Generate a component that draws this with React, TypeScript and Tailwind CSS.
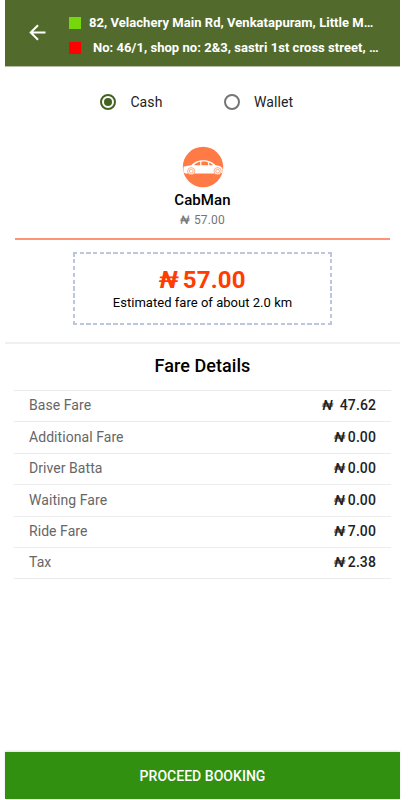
import clsx from "clsx";
import { useState } from "react";

const fares = [
  { label: "Base Fare", amount: "47.62", spaced: true },
  { label: "Additional Fare", amount: "0.00" },
  { label: "Driver Batta", amount: "0.00" },
  { label: "Waiting Fare", amount: "0.00" },
  { label: "Ride Fare", amount: "7.00" },
  { label: "Tax", amount: "2.38" },
];

function BackIcon() {
  return (
    <svg width="18" height="18" viewBox="0 0 18 18" fill="none" stroke="white" strokeWidth="2">
      <path d="M16.5 8.5H2.2M9 1.2L1.7 8.5l7.3 7.3" />
    </svg>
  );
}

function CarIcon() {
  return (
    <svg width="42" height="42" viewBox="0 0 42 42">
      <circle cx="21" cy="21" r="20.2" fill="#ff7a45" />
      <path
        d="M1.5 20.8C4 19.7 7 19.5 9.2 19.2C12.2 16.4 15 14.2 21 14.2C27 14.2 30 15.8 33.6 19.2C37.6 19.6 40.3 20.6 40.7 23.4L40.4 26.8L38 27.6H3.5L1.4 26.2Z"
        fill="white"
      />
      <path
        d="M12 19.2C13.6 17.4 15.4 16.2 18.2 15.8V19.2ZM19.4 15.7C22 15.5 23.6 15.6 25.6 16L26.4 19.2H19.4ZM26.8 16.4C28.6 17 30 18 31.2 19.2H27.6Z"
        fill="#ff7a45"
      />
      <g fill="white" stroke="#ff7a45" strokeWidth="0.6">
        <circle cx="9.2" cy="25.2" r="3.6" />
        <circle cx="35.6" cy="25.2" r="3.6" />
        <circle cx="9.2" cy="25.2" r="1.9" />
        <circle cx="35.6" cy="25.2" r="1.9" />
      </g>
    </svg>
  );
}

function Naira() {
  return <span className="inline-block -skew-x-12">₦</span>;
}

function App() {
  const [payment, setPayment] = useState("Cash");

  return (
    <div className="h-[800px] w-[408px] bg-white pl-[5px] font-['Roboto',sans-serif] text-black">
      <div className="flex h-[799px] w-[395px] flex-col">
        <header className="flex h-[67px] shrink-0 items-center border-b border-[#b5bca8] bg-[#526b2d] pl-6 text-white">
          <button>
            <BackIcon />
          </button>
          <div className="ml-[22px] flex flex-col pt-1 text-[13px] font-bold leading-[25px] tracking-[0.04px] whitespace-nowrap">
            <div className="flex items-center">
              <span className="mr-2 size-3 bg-[#76d80c]" />
              <span>82, Velachery Main Rd, Venkatapuram, Little M…</span>
            </div>
            <div className="flex items-center">
              <span className="mr-3 size-3 bg-[#ff0000]" />
              <span>No: 46/1, shop no: 2&amp;3, sastri 1st cross street, …</span>
            </div>
          </div>
        </header>

        <div className="flex h-[70px] shrink-0 items-center pl-[95.4px] text-sm tracking-[0.1px] text-[#222222]">
          {["Cash", "Wallet"].map((name) => (
            <button key={name} className="flex w-[123.5px] items-center gap-[14px]" onClick={() => setPayment(name)}>
              <span
                className={clsx(
                  "flex size-4 items-center justify-center rounded-full border-2",
                  payment === name ? "border-[#456320]" : "border-[#757575]"
                )}
              >
                {payment === name && <span className="size-2 rounded-full bg-[#456320]" />}
              </span>
              <span>{name}</span>
            </button>
          ))}
        </div>

        <div className="mx-[10px] flex h-[103px] shrink-0 flex-col items-center border-b-2 border-[#ff9376] pt-[9px]">
          <CarIcon />
          <div className="mt-0.5 text-[15px] font-medium leading-5 tracking-[0.1px]">CabMan</div>
          <div className="text-xs leading-5 tracking-[0.15px] text-[#757575]">
            <Naira /> <span className="ml-px">57.00</span>
          </div>
        </div>

        <div className="mt-3 ml-[68px] flex h-[73px] w-[259px] shrink-0 flex-col items-center bg-[repeating-linear-gradient(90deg,#bcc6dc_0_4.4px,transparent_4.4px_6.7px),repeating-linear-gradient(90deg,#bcc6dc_0_4.4px,transparent_4.4px_6.7px),repeating-linear-gradient(0deg,#bcc6dc_0_4.4px,transparent_4.4px_6.85px),repeating-linear-gradient(0deg,#bcc6dc_0_4.4px,transparent_4.4px_6.85px)] bg-[size:100%_2px,100%_2px,2px_100%,2px_100%] bg-[position:top,bottom,left,right] bg-no-repeat pt-3.5">
          <div className="text-2xl font-bold leading-7 text-[#ff3d00]">
            <Naira />
            <span className="ml-1 tracking-[0.2px]">57.00</span>
          </div>
          <div className="text-[13px] leading-[18px] tracking-[0.03px]">Estimated fare of about 2.0 km</div>
        </div>

        <h2 className="mt-[17px] flex h-[48px] shrink-0 items-center justify-center border-t-2 border-[#f0f0f0] pb-0.5 text-lg font-medium tracking-[0.05px]">
          Fare Details
        </h2>

        <div className="mx-[9px] border-t border-[#eaeaea]">
          {fares.map((fare) => (
            <div
              key={fare.label}
              className="flex h-[31.4px] items-center justify-between border-b border-[#ececec] px-[15px] pb-[1.6px] text-sm"
            >
              <span className="tracking-[0.06px] text-[#666666]">{fare.label}</span>
              <span className="font-medium tracking-[0.1px] text-[#222222]">
                <Naira />
                <span className={fare.spaced ? "ml-1.5" : "ml-0.5"}>{fare.amount}</span>
              </span>
            </div>
          ))}
        </div>

        <button className="mt-auto h-[47px] shrink-0 bg-[#319010] text-sm font-medium tracking-[0.03px] text-white shadow-[0_-1px_2px_rgba(0,0,0,0.12)]">
          PROCEED BOOKING
        </button>
      </div>
    </div>
  );
}

export default App;
